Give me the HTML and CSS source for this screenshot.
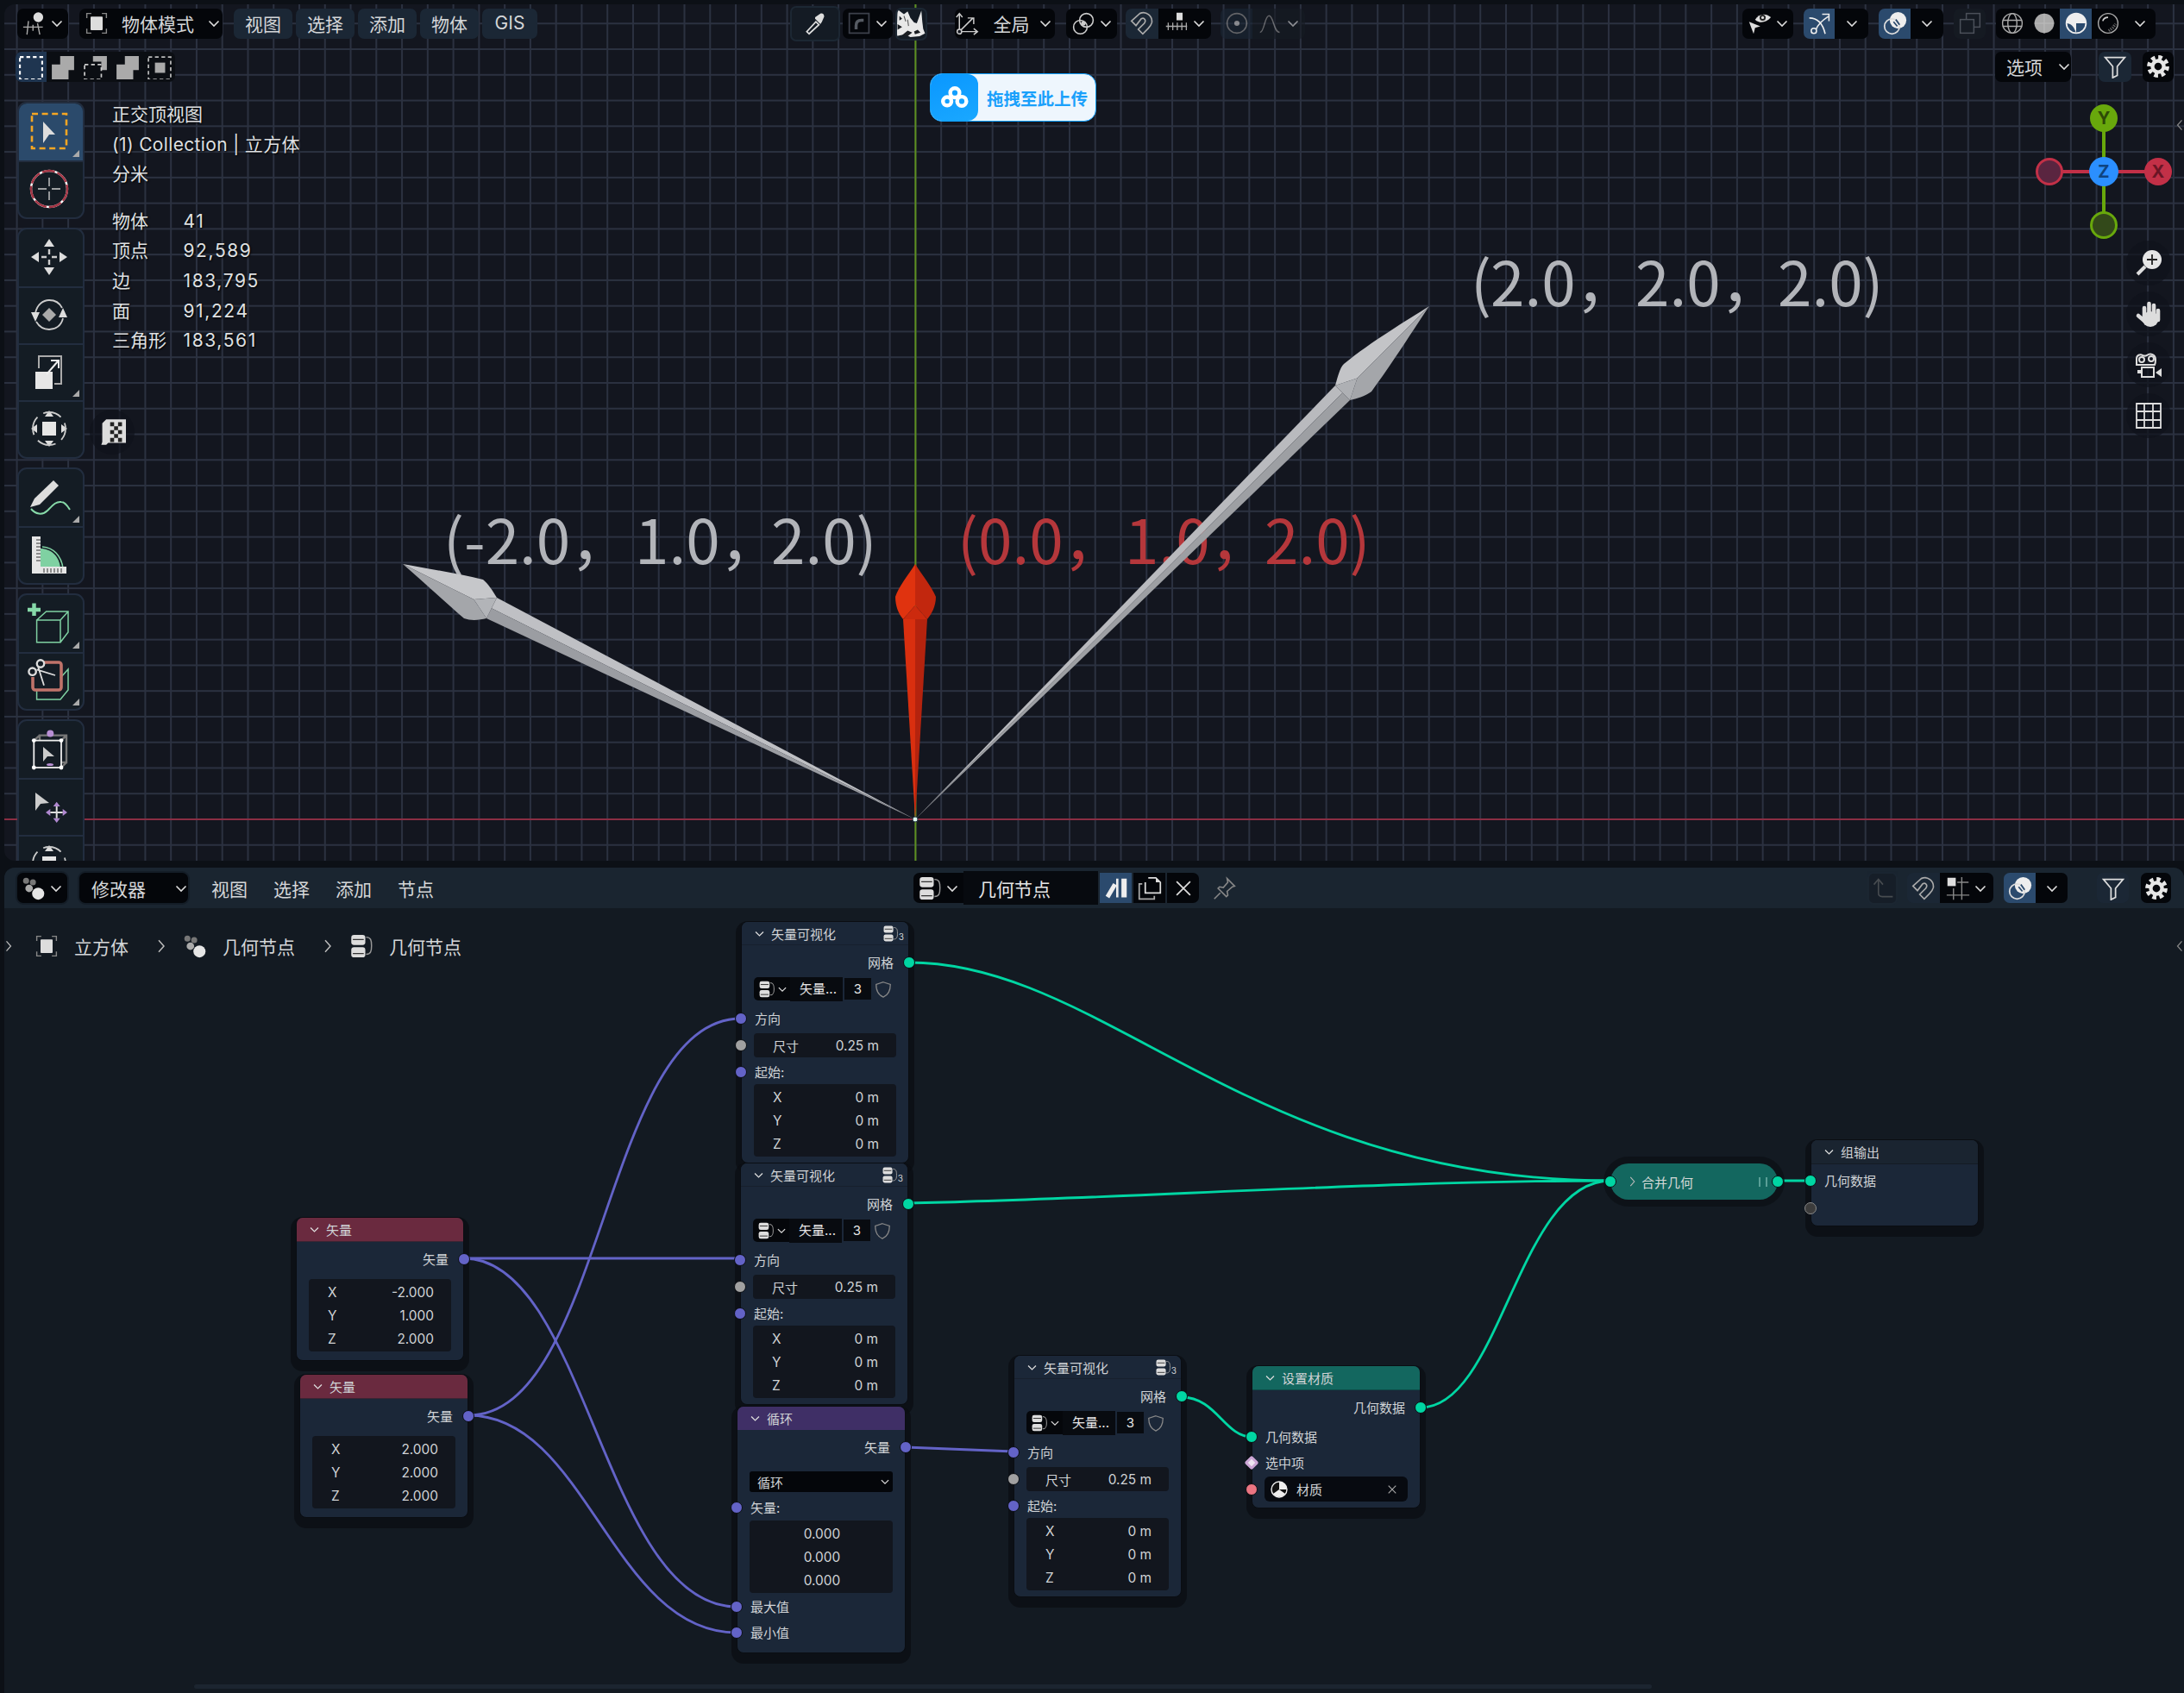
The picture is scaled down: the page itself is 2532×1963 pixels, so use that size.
FILE: index.html
```html
<!DOCTYPE html>
<html lang="zh-CN">
<head>
    <meta charset="UTF-8">
    <title>Blender - 几何节点</title>
    <link rel="stylesheet" href="styles.css">
</head>
<body>
    <!-- shared icons -->
    <svg class="sprite" aria-hidden="true">
        <symbol id="chev" viewBox="0 0 16 16"><path d="M2.5 5.5 8 11l5.5-5.5" fill="none" stroke="#ddd" stroke-width="1.6"/></symbol>
        <symbol id="chev-r" viewBox="0 0 16 24"><path d="M4 3l8 9-8 9" fill="none" stroke="#bbb" stroke-width="2"/></symbol>
        <symbol id="view3d" viewBox="0 0 32 32"><circle cx="21" cy="8" r="6.5" fill="#ddd"/><path d="M1 21h26M8 13l-2 18M20 16l3 15M14 18v8" fill="none" stroke="#aaa" stroke-width="1.6"/></symbol>
        <symbol id="object" viewBox="0 0 32 32"><path d="M3 9V3h6M23 3h6v6M29 23v6h-6M9 29H3v-6" fill="none" stroke="#888" stroke-width="1.6"/><rect x="8" y="7" width="16" height="18" rx="1" fill="#ddd"/></symbol>
        <symbol id="nodes" viewBox="0 0 32 32"><circle cx="6" cy="6" r="4" fill="#777"/><circle cx="15" cy="8" r="4" fill="#777"/><circle cx="10" cy="16" r="5" fill="#aaa"/><circle cx="22" cy="23" r="8" fill="#e6e6e6"/></symbol>
        <symbol id="tree" viewBox="2 0 28 31"><rect x="3" y="1" width="18" height="13" rx="3.5" fill="#ddd"/><rect x="3" y="17" width="18" height="13" rx="3.5" fill="#ddd"/><path d="M5 7h14M5 25h14" stroke="#333" stroke-width="1.5"/><path d="M22 4c6 0 7 4 7 11s-1 11-7 11" fill="none" stroke="#999" stroke-width="1.6"/></symbol>
        <symbol id="magnet" viewBox="0 0 32 32"><path d="M2 13 13 3c9-4 17 4 16 12-1 4-3 6-5 8l-7 7-6-6 8-8c3-4 0-8-4-6l-7 9z" fill="none" stroke="#aaa" stroke-width="1.9"/></symbol>
        <symbol id="overlay" viewBox="0 0 32 32"><circle cx="20" cy="12" r="11" fill="#eee"/><circle cx="12" cy="20" r="10" fill="none" stroke="#ddd" stroke-width="2"/><path d="M17 11l5 7M14 14l5 6" stroke="#2b4a6d" stroke-width="2"/></symbol>
        <symbol id="funnel" viewBox="0 0 32 32"><path d="M3 4h26L19 16v12l-6 3V16z" fill="none" stroke="#ddd" stroke-width="2"/></symbol>
        <symbol id="gear" viewBox="0 0 32 32"><circle cx="16" cy="16" r="7.5" fill="none" stroke="#e6e6e6" stroke-width="5"/><circle cx="16" cy="16" r="12" fill="none" stroke="#e6e6e6" stroke-width="5.5" stroke-dasharray="5.2 4.2"/></symbol>
        <symbol id="shield" viewBox="0 0 24 24"><path d="M12 3l9 3c0 8-2 13-9 16C5 19 3 14 3 6z" fill="none" stroke="#888" stroke-width="1.4"/></symbol>
    </svg>

    <div class="viewport">
        <!-- scene: axis lines, labels and arrows, in page coordinates -->
        <svg class="scene" viewBox="5 5 2527 993">
            <path d="M5 950H2532" stroke="#8a2e43" stroke-width="2"/>
            <path d="M1061.4 5V998" stroke="#5d8f1f" stroke-width="2"/>
            <g class="big-text">
                <text y="355"><tspan x="1705">(</tspan><tspan x="1728">2.0，</tspan><tspan x="1896">2.0，</tspan><tspan x="2061">2.0)</tspan></text>
                <text y="654"><tspan x="514">(-2.0，</tspan><tspan x="736">1.0，</tspan><tspan x="894">2.0)</tspan></text>
                <text y="654" class="big-red"><tspan x="1110">(0.0，</tspan><tspan x="1304">1.0，</tspan><tspan x="1466">2.0)</tspan></text>
            </g>
            <polygon points="1061,950 1548,447 1556.5,455.4" fill="#b9babe"/>
            <polygon points="1061,950 1556.5,455.4 1565,464" fill="#9d9fa3"/>
            <path d="M1548 447C1551 437 1553 427 1558 422C1590 396 1630 372 1657 355L1573.5 438.4z" fill="#c3c4c7"/>
            <path d="M1565 464C1573 462 1582 460 1590 454C1615 420 1640 380 1657 355L1573.5 438.4z" fill="#a4a6aa"/>
            <polygon points="1548,447 1573.5,438.4 1565,464" fill="#aeb0b4"/>

            <polygon points="1061,950 576,693 569.9,705.3" fill="#bfc0c4"/>
            <polygon points="1061,950 569.9,705.3 564,717" fill="#9b9da2"/>
            <path d="M576 693C570 683 566 677 560 672C530 665 495 659 467 654L549.3 695z" fill="#c6c7ca"/>
            <path d="M564 717C556 719 546 720 538 717C515 697 490 674 467 654L549.3 695z" fill="#a4a6aa"/>
            <polygon points="576,693 549.3,695 564,717" fill="#b2b4b8"/>

            <polygon points="1061,950 1047,718 1061,718" fill="#d92f0f"/>
            <polygon points="1061,950 1061,718 1075,718" fill="#b4230e"/>
            <path d="M1061 654C1052 668 1042 680 1038 692C1038 703 1042 712 1047 718L1061 702z" fill="#e0330f"/>
            <path d="M1061 654C1070 668 1080 680 1085 692C1085 703 1080 712 1075 718L1061 702z" fill="#c2270e"/>
            <polygon points="1047,718 1061,702 1075,718" fill="#cc2a0e"/>
            <circle cx="1061" cy="950" r="3" fill="#dfe" stroke="#234" stroke-width="1"/>
        </svg>

        <!-- top header -->
        <div class="bar bar-top">
            <div class="btn btn-dark w59"><svg class="ic"><use href="#view3d"/></svg><svg class="cv"><use href="#chev"/></svg></div>
            <div class="btn btn-dark w166 ml13"><svg class="ic"><use href="#object"/></svg><span class="grow">物体模式</span><svg class="cv"><use href="#chev"/></svg></div>
            <div class="btn btn-menu w68 ml13">视图</div>
            <div class="btn btn-menu w68 ml4">选择</div>
            <div class="btn btn-menu w68 ml4">添加</div>
            <div class="btn btn-menu w68 ml4">物体</div>
            <div class="btn btn-menu w64 ml4">GIS</div>

            <div class="btn btn-soft w58 ml293 tall">
                <svg class="ic" viewBox="0 0 32 32"><path d="M8 30l-3-3 12-13 4 4z" fill="none" stroke="#ddd" stroke-width="2"/><path d="M16 10l7 7 2-3 3-7c0-3-2-5-5-4l-7 5z" fill="#ddd"/></svg>
            </div>
            <div class="btn btn-dark w58 ml3">
                <svg class="ic" viewBox="0 0 32 32"><rect x="3" y="3" width="26" height="26" fill="none" stroke="#3c414b" stroke-width="2"/><path d="M12 24v-5c0-5 3-7 7-7h3" fill="none" stroke="#555a62" stroke-width="4"/></svg><svg class="cv"><use href="#chev"/></svg>
            </div>
            <div class="btn btn-soft w37 ml3 rhino-btn">
                <svg class="rhino" viewBox="0 0 32 32"><path d="M1 1l7 5 4-3 3 7 4 5 3 1 5-14 1 12 1 8 2 5-6 3-10 1-6-3-9 2z" fill="#e8e8e8"/><path d="M1 17l5 3-5 3zM6 29l6-5 5 2-5 4zM19 25l4-2 3 3-6 2zM3 8l3 3-3 2z" fill="#1a1d22"/><path d="M8 8l2 6M12 12l1 7" stroke="#555" stroke-width="1"/></svg>
            </div>
            <div class="btn btn-dark w116 ml32 pivot">
                <svg class="ic" viewBox="0 0 32 32"><path d="M6 27V4M2 8l4-5 4 5M6 27h23M25 23l5 4-5 4M6 27L24 9M17 9h8v8" fill="none" stroke="#ccc" stroke-width="1.7"/><circle cx="6" cy="27" r="3" fill="#13161f" stroke="#ccc" stroke-width="1.7"/></svg>
                <span class="grow center">全局</span><svg class="cv"><use href="#chev"/></svg>
            </div>
            <div class="btn btn-dark w59 ml13">
                <svg class="ic" viewBox="0 0 32 32"><circle cx="20" cy="12" r="9" fill="none" stroke="#ccc" stroke-width="1.8"/><circle cx="12" cy="21" r="9" fill="none" stroke="#ccc" stroke-width="1.8"/><circle cx="16" cy="16" r="3" fill="#ccc"/></svg><svg class="cv"><use href="#chev"/></svg>
            </div>
            <div class="btn-pair ml10">
                <div class="btn btn-menu w38 left"><svg class="ic"><use href="#magnet"/></svg></div>
                <div class="btn btn-dark w61 right">
                    <svg class="ic" viewBox="0 0 32 32"><rect x="16" y="2" width="8" height="10" fill="#ddd"/><path d="M2 20h28M5 15v10M11 15v10M17 15v10M23 15v10M29 15v10" stroke="#aaa" stroke-width="1.5"/></svg><svg class="cv"><use href="#chev"/></svg>
                </div>
            </div>
            <div class="btn-pair ml11 dim">
                <div class="btn btn-menu w37 left">
                    <svg class="ic" viewBox="0 0 32 32"><circle cx="16" cy="16" r="13" fill="none" stroke="#999" stroke-width="1.8"/><circle cx="16" cy="16" r="3.5" fill="#ccc"/></svg>
                </div>
                <div class="btn btn-off w61 right">
                    <svg class="ic" viewBox="0 0 32 32"><path d="M2 28c6 0 6-22 12-22s6 22 14 22" fill="none" stroke="#999" stroke-width="1.7"/></svg><svg class="cv"><use href="#chev"/></svg>
                </div>
            </div>

            <div class="btn btn-dark w59 ml507">
                <svg class="ic" viewBox="0 0 32 32"><path d="M10 11C15 3 24 2 31 8c-6 7-15 9-21 3z" fill="#ddd"/><circle cx="20" cy="8.5" r="4" fill="#222"/><circle cx="20" cy="8.5" r="1.8" fill="#ddd"/><path d="M2 14l15 6-7 2-2 8z" fill="#ddd"/></svg><svg class="cv"><use href="#chev"/></svg>
            </div>
            <div class="btn-pair ml12">
                <div class="btn btn-on w36 left">
                    <svg class="ic" viewBox="0 0 32 32"><path d="M3 9c11 0 18 8 21 21M12 24c2-6 7-11 16-17M20 4h9v9" fill="none" stroke="#eee" stroke-width="1.8"/><circle cx="9" cy="26" r="3.5" fill="#2b4a6d" stroke="#eee" stroke-width="1.8"/></svg>
                </div>
                <div class="btn btn-dark w39 right"><svg class="cv"><use href="#chev"/></svg></div>
            </div>
            <div class="btn-pair ml12">
                <div class="btn btn-on w37 left"><svg class="ic"><use href="#overlay"/></svg></div>
                <div class="btn btn-dark w38 right"><svg class="cv"><use href="#chev"/></svg></div>
            </div>
            <div class="btn btn-ghost w37 ml12">
                <svg class="ic" viewBox="0 0 32 32"><rect x="11" y="3" width="18" height="18" fill="none" stroke="#4b5059" stroke-width="1.7"/><rect x="3" y="11" width="18" height="18" fill="#161b23" stroke="#4b5059" stroke-width="1.7"/></svg>
            </div>
            <div class="btn-pair ml12">
                <div class="btn btn-dark w37 left">
                    <svg class="ic" viewBox="0 0 32 32"><g fill="none" stroke="#aaa" stroke-width="1.6"><circle cx="16" cy="16" r="13"/><ellipse cx="16" cy="16" rx="6" ry="13"/><path d="M3 12h26M3 20h26"/></g></svg>
                </div>
                <div class="btn btn-dark w37 seg">
                    <svg class="ic" viewBox="0 0 32 32"><circle cx="16" cy="16" r="13" fill="#aaa"/><path d="M3 16h26M16 3v26" stroke="#bbb" stroke-width="1.2"/></svg>
                </div>
                <div class="btn btn-on w37 seg">
                    <svg class="ic" viewBox="0 0 32 32"><circle cx="16" cy="16" r="13" fill="#2b4a6d" stroke="#eee" stroke-width="2"/><path d="M16 3a13 13 0 0 0-13 13c6 0 10 4 13 13z" fill="#eee"/><path d="M16 3a13 13 0 0 1 13 13H16z" fill="#eee"/></svg>
                </div>
                <div class="btn btn-dark w37 seg">
                    <svg class="ic" viewBox="0 0 32 32"><circle cx="16" cy="16" r="13" fill="none" stroke="#aaa" stroke-width="1.6"/><path d="M9 13c1-4 4-5 7-5" fill="none" stroke="#ccc" stroke-width="2"/><path d="M17 26l5-4 4-5" fill="none" stroke="#666" stroke-width="4" stroke-dasharray="1.5 1.5"/></svg>
                </div>
                <div class="btn btn-dark w37 right"><svg class="cv"><use href="#chev"/></svg></div>
            </div>
        </div>

        <!-- second row -->
        <div class="bar bar-sub">
            <div class="select-modes">
                <div class="seg-btn seg-on"><svg class="ic-sm" viewBox="0 0 26 26"><rect x="1" y="2" width="24" height="24" fill="none" stroke="#fff" stroke-width="2" stroke-dasharray="4 3"/></svg></div>
                <div class="seg-btn"><svg class="ic-sm" viewBox="0 0 26 26"><path d="M10 1h15v15h-6v10H1V10h9z" fill="#aaa"/></svg></div>
                <div class="seg-btn"><svg class="ic-sm" viewBox="0 0 26 26"><path d="M10 1h15v15h-6V7h-9z" fill="#aaa"/><rect x="1" y="10" width="18" height="16" fill="none" stroke="#ccc" stroke-width="1.6" stroke-dasharray="4 3"/></svg></div>
                <div class="seg-btn"><svg class="ic-sm" viewBox="0 0 26 26"><path d="M10 1h15v15H10zM1 10h9v6h9v10H1z" fill="#aaa"/></svg></div>
                <div class="seg-btn"><svg class="ic-sm" viewBox="0 0 26 26"><rect x="8" y="8" width="11" height="11" fill="#aaa"/><rect x="1" y="2" width="24" height="24" fill="none" stroke="#bbb" stroke-width="1.6" stroke-dasharray="4 3"/></svg></div>
            </div>
            <div class="btn btn-dark w88 ml2110"><span class="grow center">选项</span><svg class="cv"><use href="#chev"/></svg></div>
            <div class="btn btn-menu w38 ml32"><svg class="ic"><use href="#funnel"/></svg></div>
            <div class="btn btn-dark w36 ml13"><svg class="ic"><use href="#gear"/></svg></div>
        </div>

        <!-- left toolbar -->
        <div class="toolbar">
            <div class="tool-group">
                <div class="tool tool-on more"><svg class="tool-ic" viewBox="0 0 44 44"><rect x="2" y="2" width="40" height="40" fill="none" stroke="#f5a623" stroke-width="2.6" stroke-dasharray="7 4.6"/><path d="M15 11v25l7-10h7z" fill="#ddd"/></svg></div>
                <div class="tool"><svg class="tool-ic" viewBox="0 0 44 44"><circle cx="22" cy="22" r="21" fill="none" stroke="#fff" stroke-width="2.4"/><circle cx="22" cy="22" r="21" fill="none" stroke="#a33444" stroke-width="2.4" stroke-dasharray="15 3 15 3"/><path d="M22 9v10M22 25v10M9 22h10M25 22h10" stroke="#ccc" stroke-width="1.4"/></svg></div>
            </div>
            <div class="tool-group">
                <div class="tool"><svg class="tool-ic" viewBox="0 0 44 44"><path d="M22 1l6 9H16zM22 43l6-9H16zM1 22l9-6v12zM43 22l-9-6v12z" fill="#ddd"/><path d="M22 13v6M22 25v6M13 22h6M25 22h6" stroke="#ccc" stroke-width="2.4"/></svg></div>
                <div class="tool"><svg class="tool-ic" viewBox="0 0 44 44"><path d="M6 20C8 10 15 5 22 5s12 3 15 9M38 26c-2 9-9 13-16 13S10 35 7 30" fill="none" stroke="#ccc" stroke-width="1.8"/><path d="M22 14l8 8-8 8-8-8z" fill="#aaa"/><path d="M1 19h10l-5 11zM43 25H33l5-11z" fill="#ddd"/></svg></div>
                <div class="tool more"><svg class="tool-ic" viewBox="0 0 44 44"><rect x="6" y="22" width="20" height="20" fill="#e6e6e6"/><path d="M10 18V4h26v32h-8" fill="none" stroke="#aaa" stroke-width="2"/><path d="M19 25L32 10M24 9h9v9" fill="none" stroke="#eee" stroke-width="2"/></svg></div>
                <div class="tool"><svg class="tool-ic" viewBox="0 0 44 44"><rect x="14" y="14" width="16" height="16" fill="#e6e6e6"/><path d="M22 1l5 7H17zM22 43l5-7H17zM1 22l7-5v10zM43 22l-7-5v10z" fill="#ddd"/><circle cx="22" cy="22" r="19" fill="none" stroke="#ccc" stroke-width="1.8" stroke-dasharray="22 8" stroke-dashoffset="8"/></svg></div>
            </div>
            <div class="tool-group">
                <div class="tool more"><svg class="tool-ic" viewBox="0 0 44 44"><path d="M0 34l5-10L27 3l6 6-22 22z" fill="#ddd"/><path d="M1 36c5 6 13 8 19 2s10-11 16-10c4 0 7 4 10 9" fill="none" stroke="#86d9a8" stroke-width="2"/></svg></div>
                <div class="tool"><svg class="tool-ic" viewBox="0 0 44 44"><path d="M12 15c12 0 22 9 23 23H12z" fill="#7fd1a2"/><path d="M14 13c13 1 22 10 24 25" fill="none" stroke="#7fd1a2" stroke-width="1.6"/><rect x="2" y="1" width="10" height="43" fill="#e6e6e6"/><rect x="2" y="36" width="40" height="8" fill="#e6e6e6"/><path d="M7 5h5M7 9h5M7 13h5M7 17h5M7 21h5M7 25h5M7 29h5M16 38v5M20 38v5M24 38v5M28 38v5M32 38v5M36 38v5" stroke="#333" stroke-width="1"/></svg></div>
            </div>
            <div class="tool-group">
                <div class="tool more"><svg class="tool-ic" viewBox="0 0 44 44"><path d="M-3 7h15M4.500-.5V14" stroke="#86d9a8" stroke-width="4.500"/><path d="M7.600 19H35v25.800H7.600zM7.600 19l11-10H44v24L35 44.800M35 19l9-10" fill="none" stroke="#7fd1a2" stroke-width="1.5"/></svg></div>
                <div class="tool more"><svg class="tool-ic" viewBox="0 0 44 44"><path d="M7.600 33v11H35l9-11V9l-9 10" fill="none" stroke="#7fd1a2" stroke-width="1.5"/><path d="M12 1h21a3 3 0 0 1 3 3v26a3 3 0 0 1-3 3H6a3 3 0 0 1-3-3V18" fill="none" stroke="#c0736a" stroke-width="3.600"/><circle cx="2.600" cy="11.700" r="4.200" fill="#141c24" stroke="#ddd" stroke-width="2.400"/><circle cx="12" cy="2.500" r="4.200" fill="#141c24" stroke="#ddd" stroke-width="2.400"/><path d="M7.600 9.300L29 16M9 5.600L16 27.800" fill="none" stroke="#ddd" stroke-width="1.800"/></svg></div>
            </div>
            <div class="tool-group">
                <div class="tool"><svg class="tool-ic" viewBox="0 0 44 44"><path d="M11 12.600V6.600h31V38h-6M4.300 12.600L11 6.600M36 12.600l6-6M36 44l6-6" fill="none" stroke="#777" stroke-width="2.400"/><rect x="4.300" y="12.600" width="31.700" height="31.400" fill="none" stroke="#eee" stroke-width="1.800"/><circle cx="4.300" cy="12.600" r="2.400" fill="#fff"/><circle cx="36" cy="12.600" r="2.400" fill="#fff"/><circle cx="4.300" cy="44" r="2.400" fill="#fff"/><circle cx="36" cy="44" r="2.400" fill="#fff"/><circle cx="23.300" cy="4.600" r="4" fill="#b88fd4"/><path d="M15 20v17l5-6h8z" fill="#ccc"/><ellipse cx="23" cy="40.500" rx="4" ry="1.600" fill="#b88fd4"/></svg></div>
                <div class="tool"><svg class="tool-ic" viewBox="0 0 44 44"><path d="M6 6v21l6-8 10-1z" fill="#ccc"/><path d="M30.700 16.700l4 5.300h-8zM30.700 41l4-5.300h-8zM18 29l5.300-4v8zM43 29l-5.300-4v8z" fill="#b088d0"/><path d="M30.700 22v13.700M23.300 29h14.400" stroke="#ddd" stroke-width="2"/></svg></div>
                <div class="tool"><svg class="tool-ic" viewBox="0 0 44 44"><rect x="14" y="14" width="16" height="16" fill="#e6e6e6"/><path d="M22 1l5 7H17z" fill="#ddd"/><circle cx="22" cy="22" r="19" fill="none" stroke="#ccc" stroke-width="1.8" stroke-dasharray="22 8" stroke-dashoffset="8"/></svg></div>
            </div>
        </div>
        <div class="float-ic checker">
            <svg viewBox="0 0 28 28" class="fill-ic"><path d="M8 1h20v24H10l-2 2H3l1-3V5z" fill="#ddd"/><path d="M12 4h4v4h-4zM20 4h4v4h-4zM16 8h4v4h-4zM12 12h4v4h-4zM20 12h4v4h-4zM16 16h4v4h-4zM12 20h4v4h-4zM20 20h4v4h-4z" fill="#222"/></svg>
        </div>

        <!-- overlay text -->
        <div class="stats">
            <div>正交顶视图</div>
            <div class="stats-name">(1) Collection | 立方体</div>
            <div>分米</div>
            <dl>
                <dt>物体</dt><dd>41</dd>
                <dt>顶点</dt><dd>92,589</dd>
                <dt>边</dt><dd>183,795</dd>
                <dt>面</dt><dd>91,224</dd>
                <dt>三角形</dt><dd>183,561</dd>
            </dl>
        </div>

        <!-- upload badge -->
        <div class="upload">
            <div class="upload-ic">
                <svg viewBox="0 0 36 30" class="fill-ic"><g fill="none" stroke="#fff" stroke-width="5"><circle cx="18" cy="9" r="6"/><circle cx="8" cy="20" r="5.5"/><circle cx="27" cy="20" r="6"/></g></svg>
            </div>
            <span>拖拽至此上传</span>
        </div>

        <!-- nav gizmo -->
        <svg class="gizmo" viewBox="0 0 160 160">
            <path d="M79 79H142" stroke="#c23047" stroke-width="4"/>
            <path d="M16 79H79" stroke="#c23047" stroke-width="4"/>
            <path d="M79 17V141" stroke="#68a80c" stroke-width="4"/>
            <circle cx="16" cy="79" r="14.5" fill="#5a2540" stroke="#c23047" stroke-width="3"/>
            <circle cx="79" cy="141" r="14.5" fill="#33491a" stroke="#68a80c" stroke-width="3"/>
            <circle cx="142" cy="79" r="16" fill="#c23047"/>
            <circle cx="79" cy="17" r="16" fill="#68a80c"/>
            <circle cx="79" cy="79" r="17" fill="#2b8fff"/>
            <text x="142" y="86" class="giz-x">X</text>
            <text x="79" y="24" class="giz-y">Y</text>
            <text x="79" y="86" class="giz-z">Z</text>
        </svg>
        <div class="nav-tools">
            <div class="float-ic"><svg viewBox="0 0 32 32" class="fill-ic"><circle cx="20" cy="12" r="11" fill="#e6e6e6"/><path d="M20 6v12M14 12h12" stroke="#222" stroke-width="1.8"/><path d="M12 20l-9 9" stroke="#ddd" stroke-width="4"/></svg></div>
            <div class="float-ic"><svg viewBox="0 0 32 32" class="fill-ic"><ellipse cx="18" cy="22" rx="9.500" ry="9" fill="#ddd"/><path d="M11 21V9M16.500 20V4M22 20V6M27 23V12M11 24L4 18" fill="none" stroke="#ddd" stroke-width="4.600" stroke-linecap="round"/></svg></div>
            <div class="float-ic"><svg viewBox="0 0 32 32" class="fill-ic"><g fill="none" stroke="#ddd" stroke-width="2"><path d="M2 16V9c0-4 4-6 7-4 2 1 3 1 5 0 4-3 10-1 10 5 0 2 0 4-1 6z"/><circle cx="8" cy="10" r="3"/><circle cx="19" cy="9" r="3"/></g><rect x="8" y="19" width="14" height="11" fill="none" stroke="#ddd" stroke-width="2"/><path d="M3 22h4v4H3zM31 20l-7 5 7 5z" fill="#ddd"/></svg></div>
            <div class="float-ic"><svg viewBox="0 0 32 32" class="fill-ic"><path d="M2 2h28v28H2zM11 2v28M21 2v28M2 11h28M2 21h28" fill="none" stroke="#ddd" stroke-width="1.8"/></svg></div>
        </div>
        <svg class="edge-toggle edge-vp" viewBox="0 0 16 24"><path d="M12 3L4 12l8 9" fill="none" stroke="#888" stroke-width="2"/></svg>
    </div>

    <div class="editor">
        <!-- header -->
        <div class="bar editor-bar">
            <div class="btn btn-dark w58 ringed"><svg class="ic"><use href="#nodes"/></svg><svg class="cv"><use href="#chev"/></svg></div>
            <div class="btn btn-dark w126 ml14 ringed"><span class="grow pad">修改器</span><svg class="cv"><use href="#chev"/></svg></div>
            <div class="btn w68 ml14">视图</div>
            <div class="btn w68 ml4">选择</div>
            <div class="btn w68 ml4">添加</div>
            <div class="btn w68 ml4">节点</div>

            <div class="tree-picker">
                <div class="btn btn-dark w58 left"><svg class="ic"><use href="#tree"/></svg><svg class="cv"><use href="#chev"/></svg></div>
                <div class="tree-name">几何节点</div>
                <div class="btn btn-on w37 seg"><svg class="ic" viewBox="0 0 32 32"><path d="M2 26L12 9l5 3L7 29zM16 3h3v25h-3zM23 3h7v25h-7z" fill="#eee"/></svg></div>
                <div class="btn btn-dark w37 seg"><svg class="ic" viewBox="0 0 32 32"><path d="M14 2h10l6 6v14H10V8" fill="none" stroke="#ddd" stroke-width="2"/><path d="M6 10H2v20h20v-4" fill="none" stroke="#aaa" stroke-width="2"/><path d="M24 2v6h6" fill="#ddd"/></svg></div>
                <div class="btn btn-dark w37 right"><svg class="ic" viewBox="0 0 32 32"><path d="M7 7l18 18M25 7L7 25" stroke="#ddd" stroke-width="2"/></svg></div>
            </div>
            <div class="btn w34 ml13"><svg class="ic" viewBox="0 0 32 32"><path d="M19 3l10 10-3 1-7 6 1 5-2 2-11-11 2-2 5 1 6-7z" fill="none" stroke="#888" stroke-width="1.8"/><path d="M10 22L2 30" stroke="#888" stroke-width="1.8"/></svg></div>

            <div class="btn btn-soft w35 ml728 dim"><svg class="ic" viewBox="0 0 32 32"><path d="M4 11l6-7 6 7M10 4v18c0 3 2 5 5 5h14" fill="none" stroke="#666" stroke-width="1.8"/></svg></div>
            <div class="btn-pair ml11">
                <div class="btn btn-menu w38 left"><svg class="ic"><use href="#magnet"/></svg></div>
                <div class="btn btn-dark w62 right"><svg class="ic" viewBox="0 0 32 32"><rect x="2" y="2" width="11" height="11" fill="#ddd"/><path d="M21 1v30M10 16v15M15 8h15M1 25h30" stroke="#888" stroke-width="1.6"/></svg><svg class="cv"><use href="#chev"/></svg></div>
            </div>
            <div class="btn-pair ml12">
                <div class="btn btn-on w37 left"><svg class="ic"><use href="#overlay"/></svg></div>
                <div class="btn btn-dark w37 right"><svg class="cv"><use href="#chev"/></svg></div>
            </div>
            <div class="btn btn-menu w37 ml34"><svg class="ic"><use href="#funnel"/></svg></div>
            <div class="btn btn-dark w35 ml14"><svg class="ic"><use href="#gear"/></svg></div>
        </div>

        <div class="node-canvas">
            <svg class="edge-toggle edge-left" viewBox="0 0 16 24"><use href="#chev-r"/></svg>
            <svg class="edge-toggle edge-right" viewBox="0 0 16 24"><path d="M12 3L4 12l8 9" fill="none" stroke="#888" stroke-width="2"/></svg>

            <div class="crumbs">
                <svg class="crumb-ic"><use href="#object"/></svg><span>立方体</span>
                <svg class="crumb-sep"><use href="#chev-r"/></svg>
                <svg class="crumb-ic"><use href="#nodes"/></svg><span>几何节点</span>
                <svg class="crumb-sep"><use href="#chev-r"/></svg>
                <svg class="crumb-ic"><use href="#tree"/></svg><span>几何节点</span>
            </div>

            <svg class="noodles" viewBox="5 1053 2527 910">
                <g class="geo">
                    <path d="M1054 1116C1280 1116 1450 1369 1867 1369"/>
                    <path d="M1053 1395C1300 1390 1600 1369 1867 1369"/>
                    <path d="M1647 1632C1740 1632 1760 1369 1867 1369"/>
                    <path d="M1370 1620C1410 1620 1420 1666 1451 1666"/>
                    <path d="M2061 1369H2099"/>
                </g>
                <g class="vec-link">
                    <path d="M538 1459H858"/>
                    <path d="M538 1459C680 1459 700 1863 854 1863"/>
                    <path d="M543 1641C700 1641 700 1181 859 1181"/>
                    <path d="M543 1641C680 1641 710 1893 854 1893"/>
                    <path d="M1050 1678L1175 1683"/>
                </g>
            </svg>

            <!-- 矢量 -->
            <div class="node node-f">
                <div class="node-head head-red"><svg class="cv"><use href="#chev"/></svg><span>矢量</span></div>
                <div class="node-body">
                    <div class="row out"><span>矢量</span><i class="sock vec"></i></div>
                    <div class="row-fill mt10"><div class="vec-box">
                        <div><span>X</span><span>-2.000</span></div>
                        <div><span>Y</span><span>1.000</span></div>
                        <div><span>Z</span><span>2.000</span></div>
                    </div></div>
                </div>
            </div>
            <div class="node node-g">
                <div class="node-head head-red"><svg class="cv"><use href="#chev"/></svg><span>矢量</span></div>
                <div class="node-body">
                    <div class="row out"><span>矢量</span><i class="sock vec"></i></div>
                    <div class="row-fill mt10"><div class="vec-box">
                        <div><span>X</span><span>2.000</span></div>
                        <div><span>Y</span><span>2.000</span></div>
                        <div><span>Z</span><span>2.000</span></div>
                    </div></div>
                </div>
            </div>

            <!-- 矢量可视化 x3 -->
            <div class="node node-a">
                <div class="node-head head-plain"><svg class="cv"><use href="#chev"/></svg><span class="grow">矢量可视化</span><svg class="head-tree"><use href="#tree"/></svg><small>3</small></div>
                <div class="node-body">
                    <div class="row out"><span>网格</span><i class="sock geo"></i></div>
                    <div class="row-fill mt4 picker"><div class="pick-ic"><svg class="ic-xs"><use href="#tree"/></svg><svg class="cv-xs"><use href="#chev"/></svg></div><div class="pick-name">矢量...</div><div class="pick-num">3</div><svg class="pick-sh"><use href="#shield"/></svg></div>
                    <div class="row mt7"><i class="sock vec"></i><span>方向</span></div>
                    <div class="row-fill mt4"><i class="sock val"></i><div class="val-box"><span>尺寸</span><span>0.25 m</span></div></div>
                    <div class="row mt3"><i class="sock vec"></i><span>起始:</span></div>
                    <div class="row-fill mt1"><div class="vec-box">
                        <div><span>X</span><span>0 m</span></div>
                        <div><span>Y</span><span>0 m</span></div>
                        <div><span>Z</span><span>0 m</span></div>
                    </div></div>
                </div>
            </div>
            <div class="node node-b">
                <div class="node-head head-plain"><svg class="cv"><use href="#chev"/></svg><span class="grow">矢量可视化</span><svg class="head-tree"><use href="#tree"/></svg><small>3</small></div>
                <div class="node-body">
                    <div class="row out"><span>网格</span><i class="sock geo"></i></div>
                    <div class="row-fill mt4 picker"><div class="pick-ic"><svg class="ic-xs"><use href="#tree"/></svg><svg class="cv-xs"><use href="#chev"/></svg></div><div class="pick-name">矢量...</div><div class="pick-num">3</div><svg class="pick-sh"><use href="#shield"/></svg></div>
                    <div class="row mt7"><i class="sock vec"></i><span>方向</span></div>
                    <div class="row-fill mt4"><i class="sock val"></i><div class="val-box"><span>尺寸</span><span>0.25 m</span></div></div>
                    <div class="row mt3"><i class="sock vec"></i><span>起始:</span></div>
                    <div class="row-fill mt1"><div class="vec-box">
                        <div><span>X</span><span>0 m</span></div>
                        <div><span>Y</span><span>0 m</span></div>
                        <div><span>Z</span><span>0 m</span></div>
                    </div></div>
                </div>
            </div>
            <div class="node node-d">
                <div class="node-head head-plain"><svg class="cv"><use href="#chev"/></svg><span class="grow">矢量可视化</span><svg class="head-tree"><use href="#tree"/></svg><small>3</small></div>
                <div class="node-body">
                    <div class="row out"><span>网格</span><i class="sock geo"></i></div>
                    <div class="row-fill mt4 picker"><div class="pick-ic"><svg class="ic-xs"><use href="#tree"/></svg><svg class="cv-xs"><use href="#chev"/></svg></div><div class="pick-name">矢量...</div><div class="pick-num">3</div><svg class="pick-sh"><use href="#shield"/></svg></div>
                    <div class="row mt7"><i class="sock vec"></i><span>方向</span></div>
                    <div class="row-fill mt4"><i class="sock val"></i><div class="val-box"><span>尺寸</span><span>0.25 m</span></div></div>
                    <div class="row mt3"><i class="sock vec"></i><span>起始:</span></div>
                    <div class="row-fill mt1"><div class="vec-box">
                        <div><span>X</span><span>0 m</span></div>
                        <div><span>Y</span><span>0 m</span></div>
                        <div><span>Z</span><span>0 m</span></div>
                    </div></div>
                </div>
            </div>

            <!-- 循环 -->
            <div class="node node-c">
                <div class="node-head head-purple"><svg class="cv"><use href="#chev"/></svg><span>循环</span></div>
                <div class="node-body">
                    <div class="row out"><span>矢量</span><i class="sock vec"></i></div>
                    <div class="row-fill mt15"><div class="drop"><span>循环</span><svg class="cv-xs"><use href="#chev"/></svg></div></div>
                    <div class="row mt4"><i class="sock vec"></i><span>矢量:</span></div>
                    <div class="row-fill mt2"><div class="vec-box centered">
                        <div><span>0.000</span></div>
                        <div><span>0.000</span></div>
                        <div><span>0.000</span></div>
                    </div></div>
                    <div class="row mt2"><i class="sock vec"></i><span>最大值</span></div>
                    <div class="row mt3"><i class="sock vec"></i><span>最小值</span></div>
                </div>
            </div>

            <!-- 设置材质 -->
            <div class="node node-e">
                <div class="node-head head-teal"><svg class="cv"><use href="#chev"/></svg><span>设置材质</span></div>
                <div class="node-body">
                    <div class="row out"><span>几何数据</span><i class="sock geo"></i></div>
                    <div class="row mt7"><i class="sock geo"></i><span>几何数据</span></div>
                    <div class="row mt3"><i class="sock bool"></i><span>选中项</span></div>
                    <div class="row-fill mt3"><i class="sock mat"></i><div class="mat-box">
                        <svg class="ic-mat" viewBox="0 0 20 20"><circle cx="10" cy="10" r="9" fill="#111" stroke="#eee" stroke-width="1.4"/><path d="M10 1a9 9 0 0 1 9 9H10zM10 10 3 15a9 9 0 0 0 14 0z" fill="#eee"/></svg>
                        <span class="grow">材质</span>
                        <svg class="ic-x" viewBox="0 0 14 14"><path d="M2 2l10 10M12 2L2 12" stroke="#aaa" stroke-width="1.3"/></svg>
                    </div></div>
                </div>
            </div>

            <!-- 合并几何 -->
            <div class="node-pill">
                <i class="sock geo sock-in"></i>
                <svg class="cv-r"><use href="#chev-r"/></svg><span class="grow">合并几何</span>
                <span class="pill-bars"></span>
                <i class="sock geo sock-out"></i>
            </div>

            <!-- 组输出 -->
            <div class="node node-i">
                <div class="node-head head-dark"><svg class="cv"><use href="#chev"/></svg><span>组输出</span></div>
                <div class="node-body">
                    <div class="row mt-1"><i class="sock geo"></i><span>几何数据</span></div>
                    <div class="row mt5"><i class="sock empty"></i></div>
                </div>
            </div>

            <div class="hscroll"></div>
        </div>
    </div>
</body>
</html>
```

FILE: styles.css
```css
* {
    box-sizing: border-box;
}

body {
    margin: 0;
    width: 2532px;
    height: 1963px;
    overflow: hidden;
    background-color: #0c1016;
    color: #d4d6d8;
    font-family: Inter, "Noto Sans CJK SC", sans-serif;
    font-size: 21px;
}

.sprite {
    position: absolute;
    width: 0;
    height: 0;
}

/* 3D viewport */
.viewport {
    position: relative;
    height: 993px;
    margin: 5px 0 0 5px;
    overflow: hidden;
    border-radius: 12px 0 0 12px;
    background-color: #13161f;
    background-image:
        linear-gradient(90deg, #2b3140 2px, transparent 2px),
        linear-gradient(#2b3140 2px, transparent 2px);
    background-size: 29.77px 29.77px;
    background-position: 1055.4px 944px;
}

.scene {
    position: absolute;
    left: 0;
    top: 0;
    width: 2527px;
    height: 993px;
}

.big-text text {
    font-family: "Noto Sans CJK SC", sans-serif;
    font-size: 71px;
    fill: #b2b4b9;
    white-space: pre;
}

.big-text .big-red {
    fill: #b5373b;
}

/* header bars */
.bar {
    display: flex;
    align-items: center;
}

.bar-top {
    position: absolute;
    left: 15px;
    top: 5px;
    height: 35px;
}

.bar-sub {
    position: absolute;
    left: 13px;
    top: 55px;
    height: 35px;
}

.bar-top .btn,
.bar-sub .btn {
    padding-bottom: 2px;
}

.btn {
    display: flex;
    flex: none;
    align-items: center;
    justify-content: center;
    height: 35px;
    border-radius: 7px;
    color: #d4d6d8;
    white-space: nowrap;
}

.btn-dark {
    background: #04060a;
}

.btn-menu {
    background: #1b2735;
}

.btn-soft {
    height: 38px;
    background: #141b24;
    border: 2px solid #1c2733;
}

.btn-soft.tall {
    height: 41px;
}

.btn-on {
    background: #2b4a6d;
}

.btn-off {
    background: #161b23;
}

.btn-ghost {
    background: #151a22;
}

.rhino-btn {
    overflow: hidden;
}

.rhino {
    width: 35px;
    height: 34px;
    flex: none;
}

.btn-pair {
    display: flex;
    flex: none;
}

.btn-pair .left,
.tree-picker .left {
    border-radius: 7px 0 0 7px;
}

.btn-pair .right,
.tree-picker .right {
    border-radius: 0 7px 7px 0;
}

.btn-pair .seg,
.tree-picker .seg {
    border-radius: 0;
}

.dim {
    opacity: .6;
}

.ringed {
    box-shadow: 0 0 0 2px #141d27;
}

.ic {
    width: 28px;
    height: 28px;
    flex: none;
}

.cv {
    width: 16px;
    height: 16px;
    flex: none;
    margin-left: 4px;
}

.btn .cv:only-child {
    margin-left: 0;
}

.grow {
    flex: 1;
}

.center {
    text-align: center;
}

.pad {
    padding-left: 14px;
}

.pivot {
    padding-right: 3px;
}

.pivot .center {
    padding-left: 10px;
}

.w34 { width: 34px; }
.w35 { width: 35px; }
.w36 { width: 36px; }
.w37 { width: 37px; }
.w38 { width: 38px; }
.w39 { width: 39px; }
.w58 { width: 58px; }
.w59 { width: 59px; }
.w61 { width: 61px; }
.w62 { width: 62px; }
.w64 { width: 64px; }
.w68 { width: 68px; }
.w88 { width: 88px; }
.w116 { width: 116px; }
.w126 { width: 126px; }
.w166 { width: 166px; padding-left: 6px; padding-right: 2px; }
.w166 .ic { margin-right: 15px; }

.ml3 { margin-left: 3px; }
.ml4 { margin-left: 4px; }
.ml10 { margin-left: 10px; }
.ml11 { margin-left: 11px; }
.ml12 { margin-left: 12px; }
.ml13 { margin-left: 13px; }
.ml14 { margin-left: 14px; }
.ml32 { margin-left: 32px; }
.ml34 { margin-left: 34px; }
.ml293 { margin-left: 293px; }
.ml507 { margin-left: 507px; }
.ml728 { margin-left: 728px; }
.ml2110 { margin-left: 2110px; }

.select-modes {
    display: flex;
    gap: 1px;
    flex: none;
    width: 185px;
    height: 35px;
    padding: 0;
    border-radius: 7px;
    overflow: hidden;
    background: #0b0e13;
}

.seg-btn {
    display: flex;
    align-items: center;
    justify-content: center;
    width: 37px;
    height: 35px;
}

.seg-on {
    background: #1f3550;
}

.ic-sm {
    width: 28px;
    height: 28px;
}

/* left toolbar */
.toolbar {
    position: absolute;
    left: 15px;
    top: 113px;
    display: flex;
    flex-direction: column;
    gap: 10px;
    width: 78px;
}

.tool-group {
    display: flex;
    flex-direction: column;
    border: 2px solid #222d3f;
    border-radius: 11px;
    overflow: hidden;
    background: #141c24;
}

.tool {
    position: relative;
    display: flex;
    align-items: center;
    justify-content: center;
    height: 66px;
    padding: 0 4px 2px 0;
    border-top: 2px solid #222d3f;
}

.tool:first-child {
    border-top: 0;
}

.tool-on {
    background: #2b4a6b;
}

.tool.more::after {
    content: "";
    position: absolute;
    right: 4px;
    bottom: 4px;
    border-left: 8px solid transparent;
    border-bottom: 8px solid #aaa;
}

.tool-ic {
    width: 44px;
    height: 44px;
    overflow: visible;
}

.float-ic {
    display: flex;
    align-items: center;
    justify-content: center;
    width: 52px;
    height: 52px;
    border-radius: 50%;
    background: rgba(16, 19, 27, .7);
}

.fill-ic {
    width: 32px;
    height: 32px;
}

.checker {
    position: absolute;
    left: 99px;
    top: 470px;
}

/* overlay text */
.stats {
    position: absolute;
    left: 125px;
    top: 111px;
    line-height: 34.6px;
    color: #dfe0e2;
    font-size: 21px;
    text-shadow: 1px 1px 2px #000;
}

.stats-name {
    letter-spacing: .35px;
}

.stats dl {
    display: grid;
    grid-template-columns: 82.5px auto;
    margin: 20px 0 0;
}

.stats dd {
    margin: 0;
    letter-spacing: 1.6px;
}

/* upload badge */
.upload {
    position: absolute;
    left: 1073px;
    top: 80px;
    display: flex;
    align-items: center;
    width: 193px;
    height: 56px;
    overflow: hidden;
    border: 1px solid #0e9fff;
    border-radius: 14px;
    background: #eef6fd;
    color: #1aa0fb;
    font-size: 19.5px;
    font-weight: 700;
}

.upload-ic {
    display: flex;
    align-items: center;
    justify-content: center;
    width: 55px;
    height: 100%;
    margin-right: 10px;
    border-radius: 0 12px 12px 0;
    background: linear-gradient(160deg, #0a97ff, #1aa8ff);
}

/* gizmo and nav tools */
.gizmo {
    position: absolute;
    left: 2355px;
    top: 114.5px;
    width: 160px;
    height: 160px;
    overflow: visible;
}

.gizmo text {
    font-size: 20px;
    font-weight: 700;
    text-anchor: middle;
}

.giz-x {
    fill: #6a1525;
}

.giz-y {
    fill: #2d4a06;
}

.giz-z {
    fill: #0f4480;
}

.nav-tools {
    position: absolute;
    left: 2460px;
    top: 274px;
    display: flex;
    flex-direction: column;
    gap: 7px;
}

.edge-toggle {
    position: absolute;
    width: 10px;
    height: 20px;
}

.edge-vp {
    right: 0;
    top: 130px;
}

/* node editor */
.editor {
    position: relative;
    height: 957px;
    margin: 8px 0 0 5px;
    overflow: hidden;
    border-radius: 12px 12px 0 0;
    background: #131a22;
}

.editor-bar {
    height: 47px;
    padding: 0 0 0 15px;
    background: #1a2530;
}

.tree-picker {
    display: flex;
    align-items: center;
    gap: 2px;
    flex: none;
    margin-left: 543px;
}

.tree-picker .left {
    margin-right: -2px;
}

.tree-name {
    display: flex;
    align-items: center;
    width: 156px;
    height: 39px;
    padding-left: 17px;
    background: #070a0f;
    color: #e6e6e6;
}

.node-canvas {
    position: relative;
    height: 910px;
}

.edge-left {
    left: 0;
    top: 34px;
}

.edge-right {
    right: 0;
    top: 34px;
}

.crumbs {
    position: absolute;
    left: 35px;
    top: 26px;
    display: flex;
    align-items: center;
    height: 36px;
    color: #d4d6d8;
}

.crumb-ic {
    width: 28px;
    height: 28px;
    flex: none;
    margin-right: 18px;
}

.crumb-sep {
    width: 12px;
    height: 20px;
    flex: none;
    margin: 0 19px 0 32px;
}

.noodles {
    position: absolute;
    left: 0;
    top: 0;
    width: 2527px;
    height: 910px;
    fill: none;
    stroke-width: 2.8;
}

.noodles .geo {
    stroke: #00d6a3;
}

.noodles .vec-link {
    stroke: #6363c7;
}

/* nodes */
.node {
    position: absolute;
    width: 195px;
    border: 1px solid #0a0d12;
    border-radius: 8px;
    background: #1b2738;
    color: #d0d3d6;
    font-size: 15px;
    box-shadow: 0 6px 0 6px rgba(11, 14, 19, .75);
}

.node-a { left: 854px; top: 15px; }
.node-b { left: 853px; top: 295px; }
.node-c { left: 849px; top: 577px; width: 196px; }
.node-d { left: 1170px; top: 518px; }
.node-e { left: 1446px; top: 530px; width: 196px; }
.node-f { left: 338px; top: 358px; }
.node-g { left: 342px; top: 540px; width: 196px; }
.node-i { left: 2094px; top: 268px; }

.node-head {
    display: flex;
    align-items: center;
    gap: 7px;
    height: 27px;
    padding-left: 14px;
    border-radius: 7px 7px 0 0;
    color: #cfd2d5;
}

.node-head .cv {
    width: 13px;
    height: 13px;
    margin: 0;
}

.head-plain {
    background: #1b2738;
    border-bottom: 1px solid #17202d;
}

.head-red {
    height: 28px;
    background: #6a2a3f;
    border-bottom: 1px solid #3d2533;
}

.head-purple {
    background: #3f2f66;
}

.head-teal {
    height: 28px;
    background: #13675f;
    border-bottom: 1px solid #0e4a47;
}

.head-dark {
    height: 28px;
    background: #1a2430;
    border-bottom: 1px solid #141b24;
}

.head-tree {
    width: 19px;
    height: 19px;
    flex: none;
    margin-right: -7px;
}

.node-head small {
    align-self: flex-end;
    margin: 0 5px 3px 0;
    font-size: 10px;
}

.node-body {
    padding: 6px 0 7px;
}

.node-f .node-body,
.node-g .node-body {
    padding-bottom: 10px;
}

.node-c .node-body {
    padding-bottom: 10px;
}

.row,
.row-fill {
    position: relative;
    display: flex;
    align-items: center;
    padding: 0 14px;
}

.row {
    height: 27px;
    padding-left: 15px;
}

.row.out {
    justify-content: flex-end;
    padding-right: 17px;
}

.mt-1 { margin-top: -1px; }
.mt1 { margin-top: 1px; }
.mt2 { margin-top: 2px; }
.mt3 { margin-top: 3px; }
.mt4 { margin-top: 4px; }
.mt5 { margin-top: 5px; }
.mt7 { margin-top: 7px; }
.mt10 { margin-top: 10px; }
.mt15 { margin-top: 15px; }

.sock {
    position: absolute;
    left: -8px;
    top: 50%;
    width: 14px;
    height: 14px;
    margin-top: -7px;
    border: 1px solid #0a0d12;
    border-radius: 50%;
}

.row.out .sock,
.sock-out {
    left: auto;
    right: -8px;
}

.sock.geo { background: #00d6a3; }
.sock.vec { background: #6363c7; }
.sock.val { background: #a1a1a1; }
.sock.mat { background: #eb7582; }
.sock.empty { background: #3c3c3c; border: 1.5px solid #8a8a8a; }

.sock.bool {
    width: 12px;
    height: 12px;
    margin-top: -6px;
    left: -7px;
    border-radius: 2px;
    border-width: 3.5px;
    border-color: #cca6d6;
    background: #efe6f2;
    transform: rotate(45deg);
}

.val-box,
.vec-box {
    flex: 1;
    border-radius: 4px;
    background: #12161e;
    font-size: 15.4px;
}

.val-box {
    display: flex;
    align-items: center;
    justify-content: space-between;
    height: 28px;
    padding: 0 20px 0 22px;
}

.val-box span:first-child {
    font-size: 15px;
}

.vec-box {
    display: flex;
    flex-direction: column;
    justify-content: center;
    height: 84px;
    padding: 0 20px 0 22px;
}

.vec-box div {
    display: flex;
    align-items: center;
    justify-content: space-between;
    height: 27px;
}

.centered div {
    justify-content: center;
}

.picker {
    height: 27px;
}

.pick-ic {
    display: flex;
    align-items: center;
    gap: 2px;
    width: 42px;
    height: 27px;
    padding-left: 5px;
    border-radius: 5px 0 0 5px;
    background: #05070b;
}

.ic-xs {
    width: 20px;
    height: 20px;
    flex: none;
}

.cv-xs {
    width: 12px;
    height: 12px;
    flex: none;
}

.pick-name {
    width: 61px;
    height: 28px;
    line-height: 28px;
    padding-left: 11px;
    background: #080b10;
    color: #e6e6e6;
}

.pick-num {
    width: 31px;
    height: 25px;
    margin-left: 2px;
    line-height: 25px;
    text-align: center;
    background: #080b10;
    color: #e6e6e6;
}

.pick-sh {
    width: 22px;
    height: 22px;
    flex: none;
    margin-left: 3px;
}

.drop {
    display: flex;
    flex: 1;
    align-items: center;
    justify-content: space-between;
    height: 24px;
    padding: 0 3px 0 9px;
    border-radius: 3px;
    background: #04060a;
}

.mat-box {
    display: flex;
    flex: 1;
    align-items: center;
    gap: 10px;
    height: 29px;
    padding: 0 12px 0 7px;
    border-radius: 6px;
    background: #070a10;
}

.ic-mat {
    width: 20px;
    height: 20px;
}

.ic-x {
    width: 12px;
    height: 12px;
}

.node-pill {
    position: absolute;
    left: 1862px;
    top: 296px;
    display: flex;
    align-items: center;
    width: 194px;
    height: 42px;
    padding: 0 12px 0 21px;
    border-radius: 21px;
    background: #13675f;
    color: #d6dad8;
    font-size: 15px;
    box-shadow: 0 0 0 8px rgba(12, 15, 20, .7);
}

.sock-in {
    left: -7px;
}

.sock-out {
    right: -7px;
}

.cv-r {
    width: 9px;
    height: 16px;
    flex: none;
    margin-right: 6px;
}

.pill-bars {
    width: 10px;
    height: 11px;
    border-left: 2.5px solid #5a9f97;
    border-right: 2.5px solid #5a9f97;
}

.hscroll {
    position: absolute;
    left: 220px;
    bottom: 5px;
    width: 1690px;
    height: 5px;
    border-radius: 3px;
    background: #1c2530;
}
```
